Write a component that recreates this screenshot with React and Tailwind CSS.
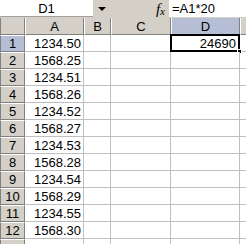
const rows = [
  '1234.50', '1568.25', '1234.51', '1568.26', '1234.52', '1568.27',
  '1234.53', '1568.28', '1234.54', '1568.29', '1234.55', '1568.30', '',
];

const cols = ['A', 'B', 'C', 'D'];

const App = () => {
  return (
    <div className="w-[246px] h-[244px] overflow-hidden bg-[#d4d0c8] font-['Liberation_Sans',Arial,sans-serif] text-[13px] text-black leading-none">
      {/* Formula bar */}
      <div className="flex h-[18px]">
        <div className="w-[93px] h-[17px] bg-white border-b border-[#a0a0a0] flex items-center justify-center">D1</div>
        <div className="w-[17px] h-[17px] flex items-center justify-center">
          <div className="w-0 h-0 border-l-[4px] border-r-[4px] border-t-[4px] border-l-transparent border-r-transparent border-t-black" />
        </div>
        <div className="flex-1 flex items-center justify-end pr-[4px] pt-[1px]">
          <span className="font-['Liberation_Serif',serif] italic text-[15px]">f</span>
          <span className="font-['Liberation_Serif',serif] italic text-[11px] mt-[4px]">x</span>
        </div>
        <div className="w-[77px] h-[17px] bg-white flex items-center pl-[3px]">=A1*20</div>
      </div>

      {/* Sheet */}
      <div className="grid grid-cols-[25px_59px_27px_60px_69px_1fr] bg-white">
        {/* Header row */}
        <div className="h-[17px] bg-[#d4d0c8] border-l border-l-[#808080] border-r border-r-[#808080] border-b border-b-[#808080]" />
        {cols.map((c) => (
          <div
            key={c}
            className={`h-[17px] flex items-center justify-center border-r border-r-[#808080] border-b border-b-[#808080] border-l border-l-white ${c === 'D' ? 'bg-[#b6bed6]' : 'bg-[#d4d0c8]'}`}
          >
            {c}
          </div>
        ))}
        <div className="h-[17px] bg-[#d4d0c8] border-b border-b-[#808080] border-l border-l-white" />

        {rows.map((v, i) => (
          <Row key={i} n={i + 1} value={v} />
        ))}
      </div>
    </div>
  );
};

const Row = ({ n, value }) => {
  const first = n === 1;
  const cell = 'h-[17px] border-r border-b border-[#c0c0c0] bg-white';
  return (
    <>
      <div
        className={`h-[17px] flex items-center justify-center border-l border-l-[#808080] border-r border-r-[#808080] border-b border-b-[#808080] border-t border-t-white ${first ? 'bg-[#b6bed6]' : 'bg-[#d4d0c8]'}`}
      >
        {n <= 12 ? n : ''}
      </div>
      <div className={`${cell} flex items-center justify-end pr-[2px]`}>{value}</div>
      <div className={cell} />
      <div className={cell} />
      <div className={`${cell} relative flex items-center justify-end pr-[3px]`}>
        {first && (
          <>
            <span>24690</span>
            <div className="absolute -left-[1px] -top-[1px] -right-[1px] -bottom-[1px] border-2 border-black" />
            <div className="absolute -right-[3px] -bottom-[3px] w-[5px] h-[5px] bg-black border border-white" />
          </>
        )}
      </div>
      <div className={`${cell} border-r-0`} />
    </>
  );
};

export default App;
